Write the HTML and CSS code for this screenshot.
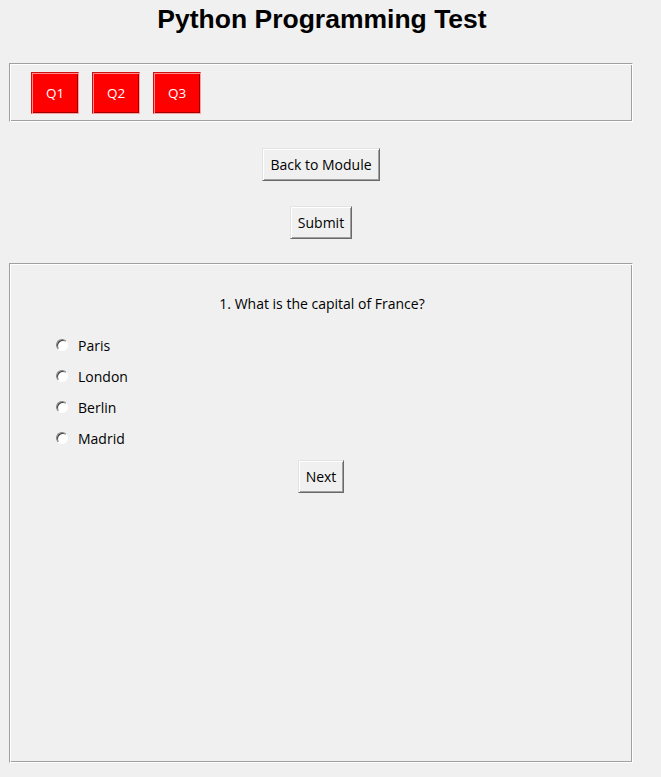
FILE: index.html
```html
<!DOCTYPE html>
<html>
<head>
<meta charset="utf-8">
<title>Python Programming Test</title>
<link rel="stylesheet" href="styles.css">
</head>
<body>
<div class="app">
  <h1 class="title">Python Programming Test</h1>
  <div class="frame nav-frame">
    <button class="qbtn">Q1</button>
    <button class="qbtn">Q2</button>
    <button class="qbtn">Q3</button>
  </div>
  <button class="btn back-btn">Back to Module</button>
  <button class="btn submit-btn">Submit</button>
  <div class="frame question-frame">
    <div class="question">1. What is the capital of France?</div>
    <div class="options">
      <label class="option"><span class="radio"></span><span class="opt-text">Paris</span></label>
      <label class="option"><span class="radio"></span><span class="opt-text">London</span></label>
      <label class="option"><span class="radio"></span><span class="opt-text">Berlin</span></label>
      <label class="option"><span class="radio"></span><span class="opt-text">Madrid</span></label>
    </div>
    <button class="btn next-btn">Next</button>
  </div>
</div>
</body>
</html>
```
FILE: styles.css
```css
html, body {
  margin: 0;
  padding: 0;
  background: #f0f0f0;
}
body {
  font-family: "Open Sans", "Noto Sans", sans-serif;
  font-size: 14px;
  color: #000;
}
.app {
  width: 624px;
  margin-left: 9px;
  display: flex;
  flex-direction: column;
  align-items: center;
}
.title {
  margin: 0;
  height: 63px;
  box-sizing: border-box;
  padding-top: 4px;
  padding-left: 2px;
  font-family: "Liberation Sans", Arial, sans-serif;
  font-weight: bold;
  font-size: 26.5px;
  line-height: 30px;
  color: #000;
}
.frame {
  box-sizing: border-box;
  width: 624px;
  border-top: 1px solid #a0a0a0;
  border-left: 1px solid #a0a0a0;
  border-bottom: 1px solid #ffffff;
  border-right: 1px solid #ffffff;
  box-shadow: inset 1px 1px 0 #ffffff, inset -1px -1px 0 #a0a0a0;
}
.nav-frame {
  height: 59px;
  display: flex;
  align-items: flex-start;
  gap: 13px;
  padding: 8px 0 0 21px;
}
.qbtn {
  box-sizing: border-box;
  width: 48px;
  height: 42px;
  margin: 0;
  padding: 0;
  background: #ff0000;
  color: #fff;
  font-family: "Open Sans", "Noto Sans", sans-serif;
  font-size: 13.5px;
  border-top: 1px solid #d01010;
  border-left: 1px solid #d01010;
  border-bottom: 1px solid #ffa0a0;
  border-right: 1px solid #ffa0a0;
  box-shadow: inset 1px 1px 0 #ff8c8c, inset -1px -1px 0 #a00000;
}
.btn {
  box-sizing: border-box;
  height: 33px;
  margin: 0;
  padding: 0 2px;
  background: #f0f0f0;
  color: #000;
  font-family: "Open Sans", "Noto Sans", sans-serif;
  font-size: 14px;
  border-top: 1px solid #e3e3e3;
  border-left: 1px solid #e3e3e3;
  border-bottom: 1px solid #696969;
  border-right: 1px solid #696969;
  box-shadow: inset 1px 1px 0 #ffffff, inset -1px -1px 0 #a0a0a0;
}
.back-btn {
  width: 118px;
  margin-top: 26px;
}
.submit-btn {
  width: 62px;
  margin-top: 25px;
}
.question-frame {
  margin-top: 24px;
  height: 500px;
  display: flex;
  flex-direction: column;
  align-items: center;
}
.question {
  margin-top: 30px;
  line-height: 20px;
  padding-left: 2px;
}
.options {
  align-self: stretch;
  display: flex;
  flex-direction: column;
  gap: 11px;
  padding-left: 46px;
  margin-top: 21px;
}
.option {
  display: flex;
  align-items: center;
  height: 20px;
  gap: 10px;
}
.radio {
  box-sizing: border-box;
  width: 12px;
  height: 12px;
  border-radius: 50%;
  background: #ffffff;
  border: 1px solid;
  border-color: #808080 #ffffff #ffffff #808080;
  box-shadow: inset 1px 1px 0 #404040;
}
.next-btn {
  width: 46px;
  margin-top: 12px;
}
```
